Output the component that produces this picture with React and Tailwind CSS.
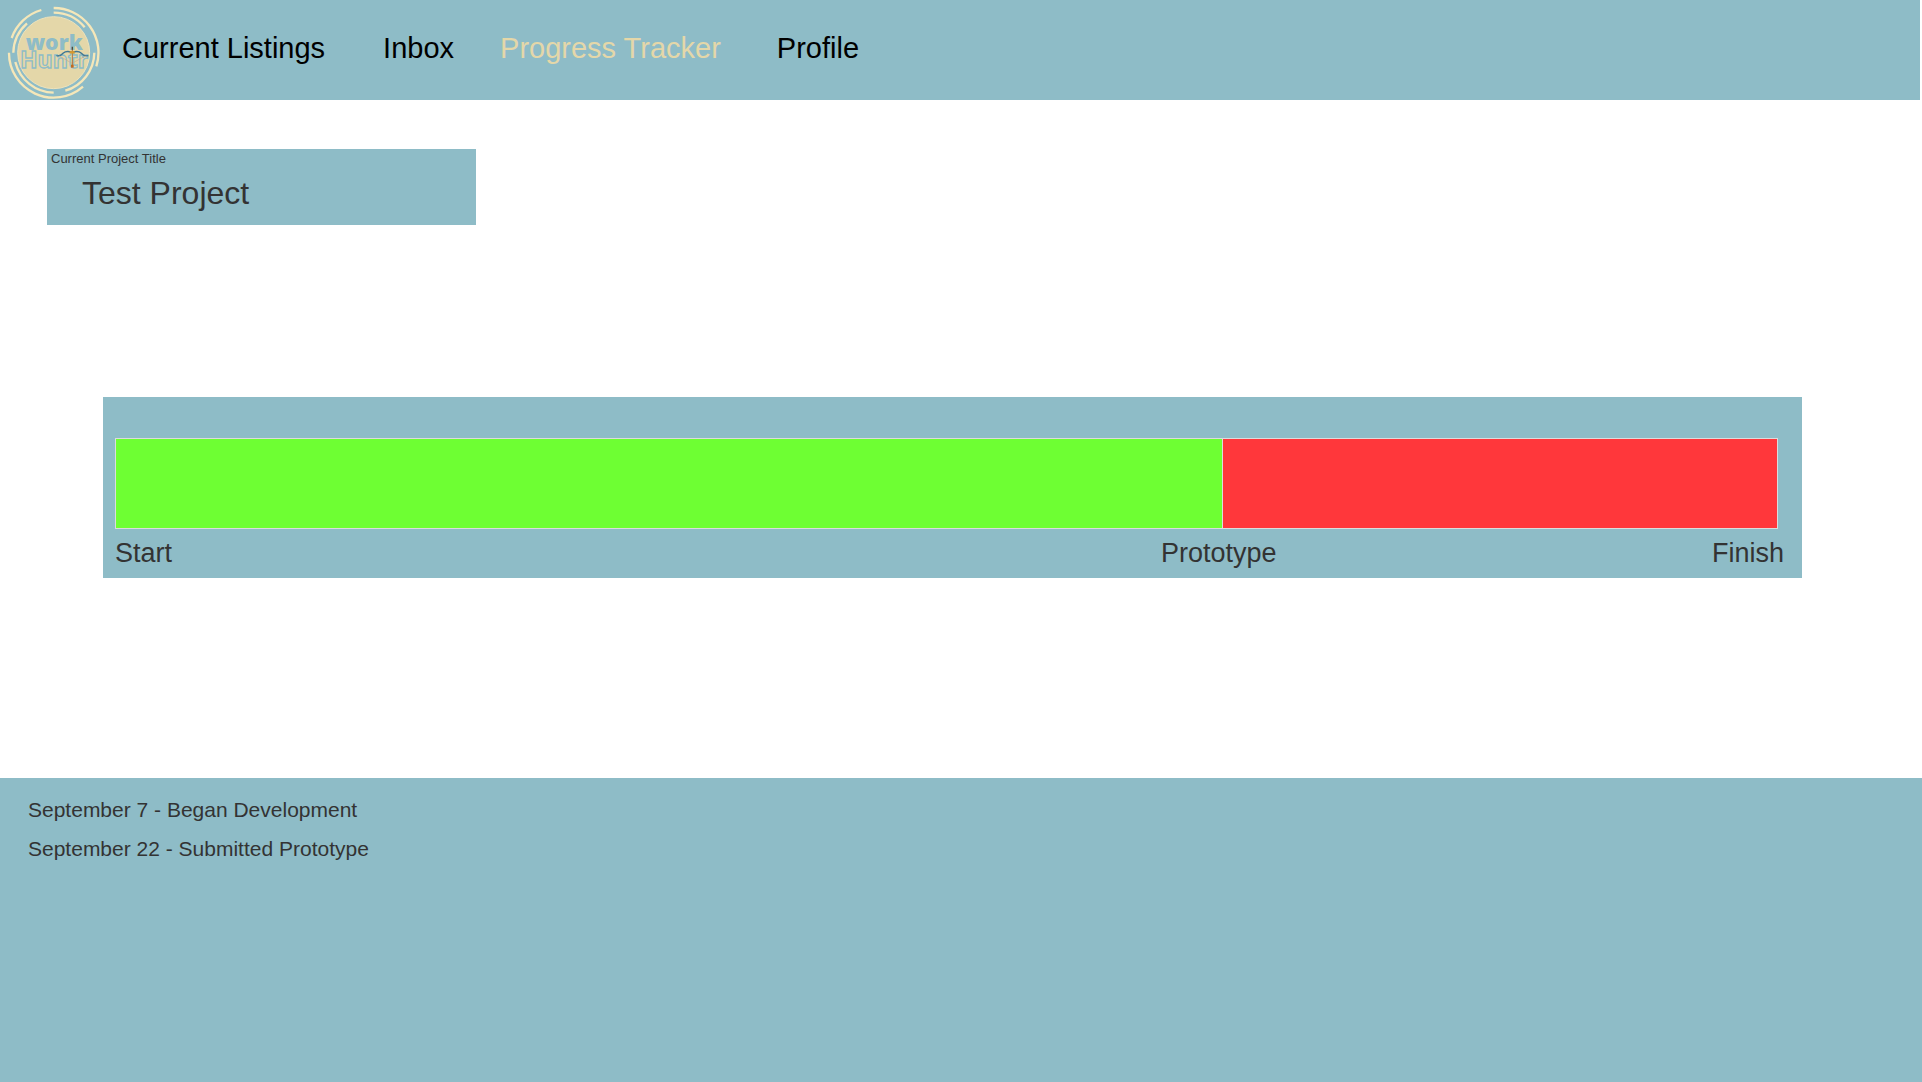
const links = [
  { label: "Current Listings", gap: "" },
  { label: "Inbox", gap: "ml-[58px]" },
  { label: "Progress Tracker", gap: "ml-[46px]", active: true },
  { label: "Profile", gap: "ml-[56px]" },
];

const events = [
  "September 7 - Began Development",
  "September 22 - Submitted Prototype",
];

function Logo() {
  return (
    <svg viewBox="0 0 300 300" className="size-[100px] shrink-0" role="img" aria-label="work Huntr">
      <circle cx="161" cy="158" r="108" fill="#e4d7a9" stroke="#efe3ba" strokeWidth="3" />
      <g fill="none" stroke="#f5e7b9" strokeWidth="7">
        <path d="M161 24A134 134 0 0 1 289 199" />
        <path d="M161 38A121 121 0 0 1 254 82" />
        <path d="M124 30A134 134 0 0 0 35 114" />
        <path d="M81 70A121 121 0 0 0 40 158" />
        <path d="M27 158A134 134 0 0 0 249 260" />
        <path d="M46 186A121 121 0 0 0 161 278" />
        <path d="M283 158A121 121 0 0 1 196 272" />
      </g>
      <text x="77" y="150" fontSize="64" fontWeight="800" fill="#8ebcc7" className="font-['Open_Sans',sans-serif]">work</text>
      <text x="60" y="205" fontSize="69" fontWeight="700" fill="#e4d7a9" stroke="#8ebcc7" strokeWidth="4" className="font-['Open_Sans',sans-serif]">Huntr</text>
      <g fill="none">
        <path d="M169 167C180 169 186 164 190 159C199 151 207 154 216 157C226 154 235 151 243 159C248 165 254 169 265 167" stroke="#3f7794" strokeWidth="4" />
        <path d="M178 168L216 190L256 168" stroke="#c7a98c" strokeWidth="2" />
        <path d="M217 146V200" stroke="#a9713f" strokeWidth="3" />
        <path d="M209 157H224" stroke="#d99a2b" strokeWidth="7" />
        <path d="M217 194V203" stroke="#c26a1e" strokeWidth="8" />
        <path d="M217 140V149" stroke="#4d4a3c" strokeWidth="4" />
      </g>
    </svg>
  );
}

export default function App() {
  return (
    <div className="flex min-h-screen flex-col bg-white font-['Liberation_Sans',Arial,sans-serif] text-[#333333]">
      <header className="mr-0.5 flex h-[100px] items-center bg-[#8ebcc7]">
        <Logo />
        <nav className="ml-[22px] flex pb-1 text-[29px] leading-9">
          {links.map(({ label, gap, active }) => (
            <a
              key={label}
              href="#"
              aria-current={active ? "page" : undefined}
              className={`${gap} ${active ? "text-[#e4d7a9]" : "text-black"}`}
            >
              {label}
            </a>
          ))}
        </nav>
      </header>

      <main className="flex flex-1 flex-col">
        <section className="mt-[49px] ml-[47px] h-[76px] w-[429px] bg-[#8ebcc7] pl-1">
          <p className="pt-0.5 text-[13px] leading-4">Current Project Title</p>
          <h1 className="mt-2 pl-[31px] text-[32px] leading-9">Test Project</h1>
        </section>

        <section className="mt-[172px] mr-[120px] ml-[103px] bg-[#8ebcc7] pt-[41px] pr-[18px] pb-2 pl-3">
          <div
            role="progressbar"
            aria-label="Project progress"
            aria-valuemin={0}
            aria-valuemax={3}
            aria-valuenow={2}
            className="mr-1.5 grid h-[91px] grid-cols-[2fr_1fr] border border-[#dcdcdc]"
          >
            <div className="border-r border-[#dcdcdc] bg-[#6eff33]" />
            <div className="bg-[#ff373b]" />
          </div>
          <div className="mt-2 grid grid-cols-[47fr_28fr] text-[27px] leading-[33px]">
            <span>Start</span>
            <span className="flex justify-between">
              <span>Prototype</span>
              <span>Finish</span>
            </span>
          </div>
        </section>

        <section className="mt-[200px] flex-1 bg-[#8ebcc7] px-7 pt-5">
          <ul className="flex flex-col gap-[15px] text-[21px] leading-6">
            {events.map((event) => (
              <li key={event}>{event}</li>
            ))}
          </ul>
        </section>
      </main>
    </div>
  );
}
